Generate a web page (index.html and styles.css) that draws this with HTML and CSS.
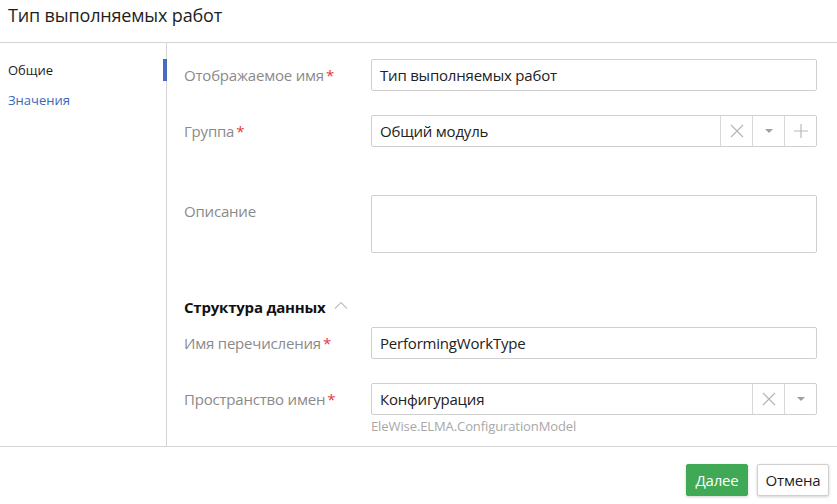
FILE: index.html
```html
<!DOCTYPE html>
<html lang="ru">
<head>
<meta charset="UTF-8">
<title>Тип выполняемых работ</title>
<link rel="stylesheet" href="styles.css">
</head>
<body>

<div class="dlg">
  <div class="dlg-head">Тип выполняемых работ</div>

  <div class="dlg-main">
    <!-- left tabs -->
    <div class="tabs">
      <div class="tab active">Общие</div>
      <div class="tab link">Значения</div>
    </div>

    <!-- form -->
    <div class="form">
      <div class="field">
        <label class="lbl">Отображаемое имя<span class="req">*</span></label>
        <div class="input">Тип выполняемых работ</div>
      </div>

      <div class="field wide">
        <label class="lbl">Группа<span class="req">*</span></label>
        <div class="select">
          <div class="val">Общий модуль</div>
          <div class="btn-ico"><svg width="14" height="14" viewBox="0 0 14 14"><path d="M1 1L13 13M13 1L1 13" stroke="#b4b4b4" stroke-width="1.1"/></svg></div>
          <div class="btn-ico"><svg width="8" height="4" viewBox="0 0 8 4"><path d="M0 0H8L4 4Z" fill="#a0a0a0"/></svg></div>
          <div class="btn-ico"><svg width="14" height="14" viewBox="0 0 14 14"><path d="M7 0V14M0 7H14" stroke="#b9b9b9" stroke-width="1.2"/></svg></div>
        </div>
      </div>

      <div class="field top">
        <label class="lbl">Описание</label>
        <div class="area"></div>
      </div>

      <div class="section">Структура данных
        <svg width="14" height="8" viewBox="0 0 14 8"><path d="M1 7.5L7 1.5L13 7.5" fill="none" stroke="#c2c2c2" stroke-width="1.2"/></svg>
      </div>

      <div class="field">
        <label class="lbl">Имя перечисления<span class="req">*</span></label>
        <div class="input">PerformingWorkType</div>
      </div>

      <div class="field">
        <label class="lbl">Пространство имен<span class="req">*</span></label>
        <div class="select">
          <div class="val">Конфигурация</div>
          <div class="btn-ico"><svg width="14" height="14" viewBox="0 0 14 14"><path d="M1 1L13 13M13 1L1 13" stroke="#b4b4b4" stroke-width="1.1"/></svg></div>
          <div class="btn-ico"><svg width="8" height="4" viewBox="0 0 8 4"><path d="M0 0H8L4 4Z" fill="#a0a0a0"/></svg></div>
        </div>
      </div>
      <div class="hint">EleWise.ELMA.ConfigurationModel</div>
    </div>
  </div>

  <div class="dlg-foot">
    <button class="btn ok">Далее</button>
    <button class="btn cancel">Отмена</button>
  </div>
</div>

</body>
</html>
```

FILE: styles.css
```css
/* —— base —— */
*{box-sizing:border-box;margin:0;padding:0}
html,body{height:100%;background:#fff;overflow:hidden}
body{font-family:"Open Sans",Arial,sans-serif;color:#222;font-size:15px}

/* —— dialog frame —— */
.dlg-head{
  height:43px;padding:3px 8px 0;
  font-size:18px;line-height:24px;color:#1e1e1e;letter-spacing:-.15px;
  border-bottom:1px solid #d4d4d4;
}
.dlg-main{display:flex;height:403px}
.dlg-foot{
  display:flex;justify-content:flex-end;gap:9px;
  border-top:1px solid #d4d4d4;padding:17px 8px 0;
}

/* —— tabs —— */
.tabs{width:167px;border-right:1px solid #d4d4d4;padding-top:16px;flex:none}
.tab{height:30px;line-height:30px;padding-left:8px;font-size:13px;color:#1e1e1e;margin-right:-1px}
.tab.active{border-right:4px solid #4a6cc0;height:22px;line-height:22px;margin-bottom:8px}
.tab.link{color:#3c67b8;line-height:22px}

/* —— form —— */
.form{flex:1;padding:16px 20px 0 17px}
.field{display:grid;grid-template-columns:187px 1fr;align-items:center;margin-bottom:24px}
.field.wide{margin-bottom:48px}
.field.top{align-items:start}
.field.top .lbl{padding-top:6px}
.lbl{color:#8a8a8a;font-size:15px;line-height:20px;letter-spacing:-.2px}
.req{color:#e4393c;margin-left:2px}

.input,.select,.area{border:1px solid #cfcfcf;border-radius:2px;background:#fff}
.input{height:32px;line-height:30px;padding:0 8px;color:#222;letter-spacing:-.2px}
.area{height:58px}

.select{display:flex;height:32px}
.select .val{flex:1;line-height:30px;padding:0 8px;letter-spacing:-.2px}
.btn-ico{
  width:32px;display:flex;align-items:center;justify-content:center;
  border-left:1px solid #d8d8d8;
}

.section{
  font-weight:700;font-size:15px;line-height:20px;color:#111;letter-spacing:-.2px;
  margin:44px 0 10px;display:flex;align-items:center;gap:8px;
}
.section svg{margin-top:-4px}

.hint{margin:-21px 0 0 187px;font-size:13px;line-height:16px;color:#a8a8a8;letter-spacing:-.1px}

/* —— buttons —— */
.btn{
  height:32px;padding:0;border-radius:2px;
  font:15px "Open Sans",Arial,sans-serif;color:#1e1e1e;letter-spacing:-.2px;
  background:#fff;border:1px solid #cfcfcf;
  box-shadow:0 1px 3px rgba(0,0,0,.18);
}
.btn.ok{width:62px;background:#40a956;border-color:#40a956;color:#fff}
.btn.cancel{width:72px}
```
